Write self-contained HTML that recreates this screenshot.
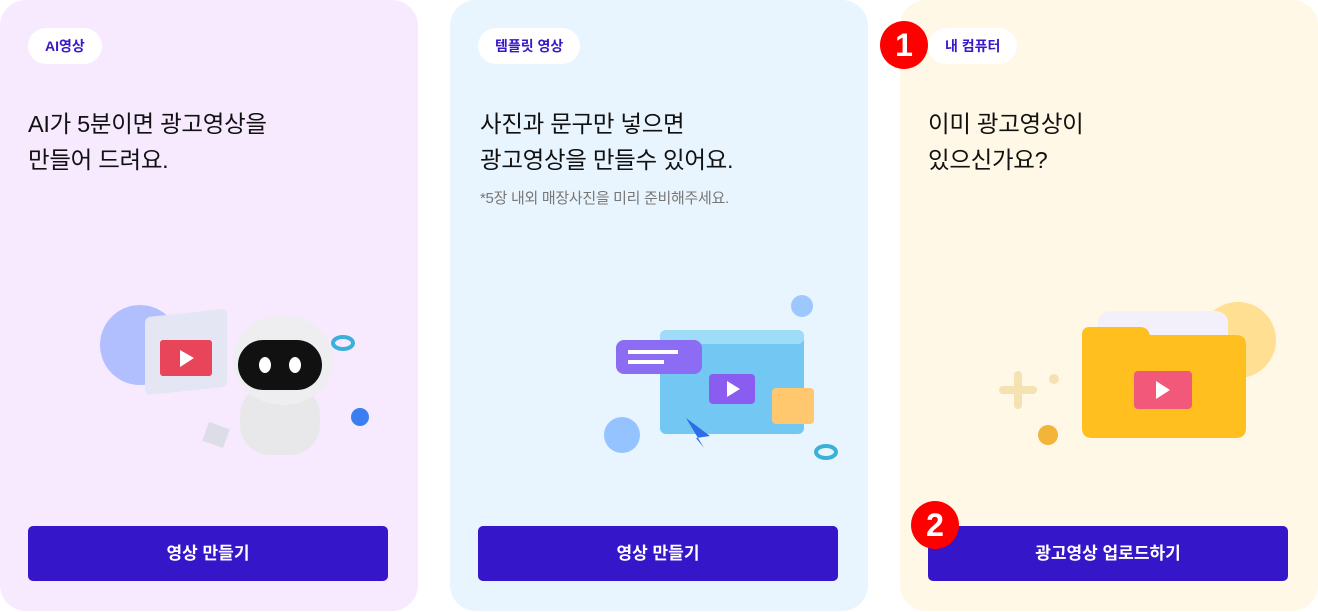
<!DOCTYPE html>
<html><head><meta charset="utf-8"><style>
*{margin:0;padding:0;box-sizing:border-box}
body{width:1318px;height:612px;background:#fff;font-family:"Liberation Sans","Noto Sans CJK KR",sans-serif;position:relative;overflow:hidden}
.card{position:absolute;top:0;width:418px;height:611px;border-radius:26px}
.tag{position:absolute;left:28px;top:28px;height:36px;padding:0 17px;border-radius:18px;background:#fff;color:#3a17c9;font-weight:700;font-size:14px;line-height:36px}
.h{position:absolute;left:28px;top:106px;font-size:23.5px;line-height:36px;color:#111;letter-spacing:-0.3px}
.sub{position:absolute;left:30px;top:187px;font-size:15px;color:#777;letter-spacing:-0.3px}
.btn{position:absolute;left:28px;top:526px;width:360px;height:55px;border-radius:5px;background:#3516c9;color:#fff;font-weight:700;font-size:17px;text-align:center;line-height:55px}
svg{position:absolute}
.badge{position:absolute;width:48px;height:48px;border-radius:50%;background:#f00;color:#fff;font-weight:700;font-size:32px;text-align:center;line-height:48px}
</style></head><body>
<div class="card" style="left:0;background:#f7eaff">
<div class="tag">AI영상</div>
<div class="h">AI가 5분이면 광고영상을<br>만들어 드려요.</div>
<svg style="left:90px;top:295px" width="300" height="170">
<circle cx="50" cy="50" r="40" fill="#9fb4ff" opacity=".8"/>
<rect x="55" y="28" width="82" height="78" rx="5" fill="#e4e6f4" transform="skewY(-6)"/>
<rect x="70" y="45" width="52" height="36" rx="3" fill="#e8445a"/>
<polygon points="90,55 90,72 104,63" fill="#fff"/>
<rect x="150" y="90" width="80" height="70" rx="30" fill="#e8e8ea"/>
<ellipse cx="193" cy="65" rx="50" ry="45" fill="#eeeef0"/>
<rect x="148" y="45" width="84" height="50" rx="25" fill="#111"/>
<ellipse cx="175" cy="70" rx="6" ry="8" fill="#fff"/><ellipse cx="205" cy="70" rx="6" ry="8" fill="#fff"/>
<ellipse cx="253" cy="48" rx="10" ry="6" fill="none" stroke="#3bb0d8" stroke-width="4"/>
<circle cx="270" cy="122" r="9" fill="#3a7ef0"/>
<rect x="115" y="130" width="22" height="20" fill="#dcdde6" transform="rotate(20 126 140)"/>
</svg>
<div class="btn">영상 만들기</div>
</div>
<div class="card" style="left:450px;background:#e8f5fe">
<div class="tag">템플릿 영상</div>
<div class="h" style="left:30px">사진과 문구만 넣으면<br>광고영상을 만들수 있어요.</div>
<div class="sub">*5장 내외 매장사진을 미리 준비해주세요.</div>
<svg style="left:126px;top:290px" width="270" height="180">
<rect x="84" y="40" width="144" height="104" rx="6" fill="#72c7f3"/>
<rect x="84" y="40" width="144" height="14" rx="6" fill="#9fdcf8"/>
<rect x="133" y="84" width="46" height="30" rx="4" fill="#8a5cf0"/>
<polygon points="151,91 151,107 164,99" fill="#fff"/>
<rect x="40" y="50" width="86" height="34" rx="8" fill="#8b6cf3"/>
<rect x="52" y="60" width="50" height="4" fill="#fff"/><rect x="52" y="70" width="36" height="4" fill="#fff"/>
<rect x="196" y="98" width="42" height="36" rx="4" fill="#ffc76e"/>
<circle cx="46" cy="145" r="18" fill="#7fb7ff" opacity=".8"/>
<circle cx="226" cy="16" r="11" fill="#9cc8ff"/>
<polygon points="110,128 134,146 120,148 128,158" fill="#2e6de8"/>
<ellipse cx="250" cy="162" rx="10" ry="6" fill="none" stroke="#3bb0d8" stroke-width="4"/>
</svg>
<div class="btn">영상 만들기</div>
</div>
<div class="card" style="left:900px;background:#fff8e6">
<div class="tag">내 컴퓨터</div>
<div class="h">이미 광고영상이<br>있으신가요?</div>
<svg style="left:98px;top:295px" width="290" height="170">
<circle cx="240" cy="45" r="38" fill="#ffd66e" opacity=".7"/>
<rect x="100" y="16" width="130" height="70" rx="12" fill="#f3f0fb"/>
<path d="M84 40 q0-8 8-8 h50 q8 0 10 8 h86 q10 0 10 10 v83 q0 10-10 10 h-144 q-10 0-10-10z" fill="#ffbf1f"/>
<rect x="136" y="76" width="58" height="38" rx="4" fill="#f2587a"/>
<polygon points="158,86 158,104 172,95" fill="#fff"/>
<path d="M20 80 v30 M5 95 h30" stroke="#f4e2b2" stroke-width="8" stroke-linecap="round"/>
<circle cx="50" cy="140" r="10" fill="#f3b43a"/>
<circle cx="56" cy="84" r="5" fill="#f4e2b2"/>
</svg>
<div class="btn">광고영상 업로드하기</div>
</div>
<div class="badge" style="left:880px;top:21px">1</div>
<div class="badge" style="left:911px;top:501px">2</div>
</body></html>
